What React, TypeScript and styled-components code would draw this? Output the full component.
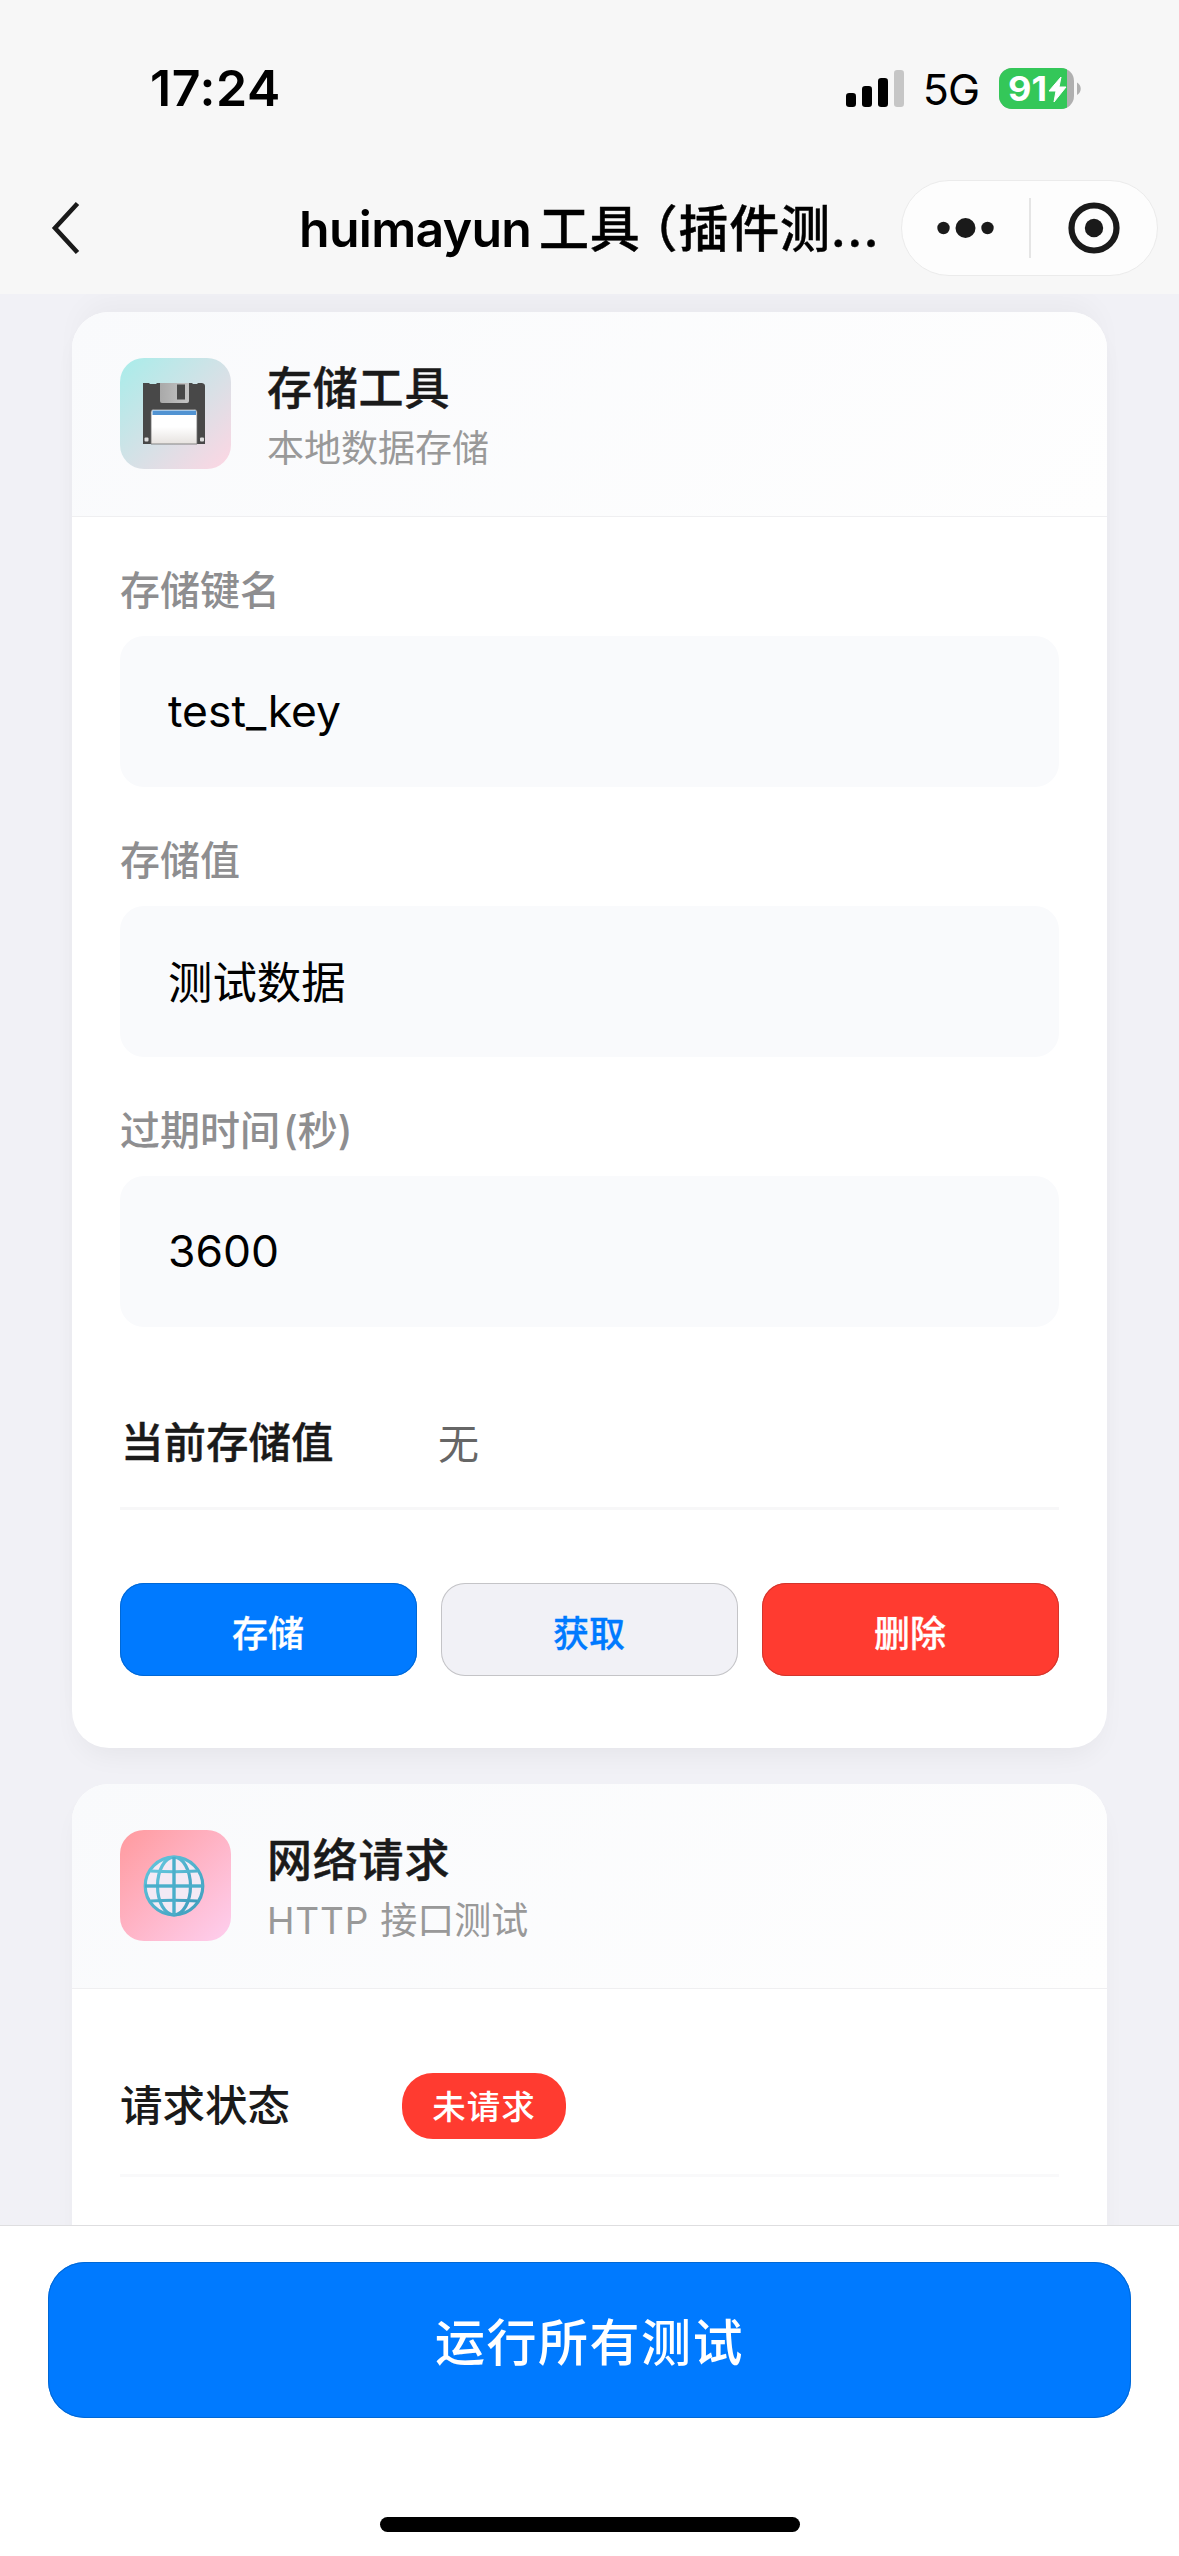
import React from "react";
import styled, { createGlobalStyle, css } from "styled-components";

const Global = createGlobalStyle`
  *, *::before, *::after { box-sizing: border-box; }
  html, body { margin: 0; padding: 0; }
  body {
    width: 1179px;
    height: 2556px;
    overflow: hidden;
    font-family: Inter, "Noto Sans CJK SC", sans-serif;
    background: #f1f1f6;
  }
  button { font-family: inherit; border: 0; padding: 0; margin: 0; }
  svg { display: block; }
`;

const Screen = styled.div`
  width: 1179px;
  height: 2556px;
  display: flex;
  flex-direction: column;
  overflow: hidden;
  background: #f1f1f6;
`;

const TopArea = styled.header`
  flex: none;
  height: 294px;
  background: #f7f7f7;
  z-index: 1;
`;

const StatusBar = styled.div`
  height: 176px;
  padding: 0 97px 0 150px;
  display: flex;
  align-items: center;
  justify-content: space-between;
`;

const Clock = styled.div`
  font-size: 50px;
  line-height: 60px;
  font-weight: 600;
  letter-spacing: 0.6px;
  color: #000;
`;

const StatusIcons = styled.div`
  display: flex;
  align-items: center;
`;

const Network = styled.span`
  margin: 2px 20px 0 18px;
  font-size: 43px;
  line-height: 50px;
  letter-spacing: -1px;
  color: #000;
`;

const NavBar = styled.div`
  height: 104px;
  padding: 0 21px 0 50px;
  display: flex;
  align-items: center;
`;

const BackButton = styled.button`
  width: 249px;
  height: 60px;
  background: none;
`;

const NavTitle = styled.h1`
  flex: 1;
  margin: 2px 0 0;
  font-size: 50px;
  line-height: 60px;
  font-weight: 600;
  white-space: nowrap;
  color: #000;
  display: flex;
`;

const TitleLatin = styled.span`
  width: 240px;
  letter-spacing: -0.7px;
`;

const TitleHan = styled.span`
  font-weight: 500;
  letter-spacing: 0.8px;
  -webkit-text-stroke: 0.45px #000;
`;

const OpenParen = styled.span`
  margin-left: 12px;
  font-feature-settings: "halt";
`;

const Dots = styled.span`
  letter-spacing: 1.2px;
`;

const Capsule = styled.div`
  width: 257px;
  height: 96px;
  border-radius: 48px;
  border: 1px solid #ebebeb;
  background: #fdfdfd;
  display: flex;
  align-items: center;
  justify-content: center;
`;

const Body = styled.main`
  flex: 1;
  min-height: 0;
  overflow: hidden;
  padding: 18px 72px 0;
  display: flex;
  flex-direction: column;
  gap: 36px;
`;

const Card = styled.section`
  flex: none;
  border-radius: 37px;
  background: #fff;
  box-shadow: 0 14px 28px -8px rgba(0, 0, 0, 0.055);
  overflow: hidden;

  &:first-child {
    box-shadow: 0 14px 28px -8px rgba(0, 0, 0, 0.055), 0 -18px 28px -8px rgba(0, 0, 0, 0.035);
  }
`;

const CardHeader = styled.div`
  height: 205px;
  padding: 0 48px;
  display: flex;
  align-items: center;
  gap: 36px;
  border-bottom: 1px solid #efeff1;
  background: linear-gradient(135deg, #f9fafc 0%, #fefefe 100%);
`;

const IconTile = styled.div<{ $from: string; $to: string }>`
  width: 111px;
  height: 111px;
  margin-bottom: 1px;
  padding: 1px 3px 0 0;
  border-radius: 24px;
  display: flex;
  align-items: center;
  justify-content: center;
  background: linear-gradient(135deg, ${(p) => p.$from}, ${(p) => p.$to});
`;

const Heading = styled.div`
  display: flex;
  flex-direction: column;
  padding-top: 7px;
`;

const CardTitle = styled.h2`
  margin: 0;
  font-size: 45px;
  line-height: 62px;
  font-weight: 500;
  letter-spacing: 0.8px;
  color: #1a1a1a;
  -webkit-text-stroke: 0.45px #1a1a1a;
`;

const CardSubtitle = styled.p`
  margin: 0;
  font-size: 37px;
  line-height: 58px;
  color: #999;
`;

const Protocol = styled.span`
  letter-spacing: 0.8px;
`;

const CardBody = styled.div`
  padding: 0 48px;
`;

const Field = styled.label`
  display: block;
  height: 270px;
  padding-top: 46px;
`;

const FieldLabel = styled.span`
  display: flex;
  height: 73px;
  font-size: 40px;
  line-height: 56px;
  font-weight: 500;
  color: #8e8e90;
`;

const FieldUnit = styled.span`
  margin-left: 3px;
`;

const FieldInput = styled.input<{ $lift?: number }>`
  display: block;
  width: 100%;
  height: 151px;
  padding: 0 48px ${(p) => p.$lift ?? 1}px;
  border: 0;
  outline: 0;
  border-radius: 24px;
  background: #f9fafc;
  font-family: inherit;
  font-size: 44.4px;
  color: #000;
`;

const InfoRow = styled.div<{ $height: number; $top: number; $line: string }>`
  height: ${(p) => p.$height}px;
  padding-top: ${(p) => p.$top}px;
  display: flex;
  align-items: center;
  border-bottom: 3px solid ${(p) => p.$line};
`;

const InfoLabel = styled.span<{ $width: number; $strong?: boolean }>`
  width: ${(p) => p.$width}px;
  font-size: 42.5px;
  line-height: 60px;
  font-weight: 500;
  color: #1a1a1a;
  ${(p) => p.$strong && css`
    padding-left: 1px;
    -webkit-text-stroke: 0.35px #1a1a1a;
  `}
`;

const InfoValue = styled.span`
  padding-top: 2px;
  font-size: 41px;
  line-height: 60px;
  color: #666;
`;

const StatusPill = styled.span`
  width: 164px;
  height: 66px;
  padding-bottom: 2px;
  border-radius: 31px;
  display: flex;
  align-items: center;
  justify-content: center;
  background: #ff3b30;
  color: #fff;
  font-size: 33.5px;
  font-weight: 500;
  letter-spacing: 1px;
`;

const Actions = styled.div`
  padding: 73px 0 72px;
  display: grid;
  grid-template-columns: repeat(3, 1fr);
  gap: 24px;
`;

const tones = {
  primary: css`
    background: #007aff;
    color: #fff;
    box-shadow: inset 0 0 0 1px #0068d6;
  `,
  plain: css`
    background: #f1f1f6;
    color: #007aff;
    box-shadow: inset 0 0 0 1px #c4c4c7;
  `,
  danger: css`
    background: #ff3b30;
    color: #fff;
    box-shadow: inset 0 0 0 1px #d2352c;
  `,
};

const ActionButton = styled.button<{ $tone: keyof typeof tones }>`
  height: 93px;
  padding: 2px 1px 0 0;
  border-radius: 24px;
  font-size: 36px;
  font-weight: 500;
  -webkit-text-stroke: 0.3px currentColor;
  ${(p) => tones[p.$tone]}
`;

const BottomBar = styled.footer`
  flex: none;
  height: 331px;
  padding: 36px 48px 0;
  border-top: 1px solid #dedee0;
  background: #fff;
  display: flex;
  flex-direction: column;
  align-items: center;
  z-index: 1;
`;

const RunButton = styled.button`
  width: 100%;
  height: 156px;
  padding-bottom: 2px;
  border-radius: 37px;
  background: #007aff;
  box-shadow: inset 0 0 0 1px #0068d6;
  color: #fff;
  font-size: 50px;
  font-weight: 500;
  letter-spacing: 1.5px;
`;

const HomeIndicator = styled.div`
  width: 420px;
  height: 15px;
  margin-top: 99px;
  border-radius: 8px;
  background: #000;
`;

const SignalIcon = () => (
  <svg width="60" height="40" viewBox="0 0 60 40">
    <rect x="1" y="25" width="10" height="14" rx="3.2" />
    <rect x="17" y="18" width="10" height="21" rx="3.2" />
    <rect x="33" y="10" width="10" height="29" rx="3.2" />
    <rect x="49" y="2" width="10" height="37" rx="3.2" fill="#c6c6c6" />
  </svg>
);

const BatteryIcon = () => (
  <svg width="83" height="41" viewBox="0 0 83 41">
    <defs>
      <clipPath id="battery-body">
        <rect width="75" height="41" rx="13" />
      </clipPath>
    </defs>
    <g clipPath="url(#battery-body)">
      <rect width="75" height="41" fill="#b0b0b0" />
      <rect width="68" height="41" fill="#34c759" />
    </g>
    <path d="M78 14.5C83 17 83 24.5 78 27Z" fill="#b0b0b0" />
    <text x="9" y="33" fontSize="34" fontWeight="700" textLength="39" lengthAdjust="spacingAndGlyphs" fill="#fff">91</text>
    <path d="M62 9L50 23H57L55 34L67 19H60Z" fill="#fff" stroke="#fff" strokeWidth="1" strokeLinejoin="round" />
  </svg>
);

const BackIcon = () => (
  <svg width="32" height="60" viewBox="0 0 32 60">
    <path d="M27.5 5.5L5 30L27.5 54.5" fill="none" stroke="#1a1a1a" strokeWidth="4.6" />
  </svg>
);

const CapsuleIcons = () => (
  <svg width="255" height="94" viewBox="0 0 255 94">
    <g fill="#1a1a1a">
      <circle cx="41.5" cy="47" r="6.2" />
      <circle cx="63.5" cy="47" r="10" />
      <circle cx="85.5" cy="47" r="6.2" />
      <circle cx="192" cy="47" r="9.2" />
    </g>
    <path d="M128 17V77" stroke="#dcdcdc" strokeWidth="1.5" />
    <circle cx="192" cy="47" r="22.5" fill="none" stroke="#1a1a1a" strokeWidth="6.2" />
  </svg>
);

const FloppyIcon = () => (
  <svg width="64" height="64" viewBox="0 0 64 64">
    <defs>
      <linearGradient id="floppy-label" x1="0" y1="0" x2="0" y2="1">
        <stop offset="0" stopColor="#fff" />
        <stop offset="0.5" stopColor="#fff" />
        <stop offset="1" stopColor="#e6e2df" />
      </linearGradient>
      <linearGradient id="floppy-shutter" x1="0" y1="0" x2="1" y2="0">
        <stop offset="0" stopColor="#a9a9a9" />
        <stop offset="1" stopColor="#c4c4c4" />
      </linearGradient>
    </defs>
    <path d="M1 1H7L8 2H14L15 1H50L51 2H55L56 1H60Q63 1.5 63 4V62H1Z" fill="#484848" />
    <path d="M18 1H47V19Q47 21 45 21H20Q18 21 18 19Z" fill="url(#floppy-shutter)" />
    <rect x="35" y="2.5" width="8" height="15" fill="#484848" />
    <path d="M9 62V30Q9 27.5 11.5 27.5H52.5Q55 27.5 55 30V62Z" fill="url(#floppy-label)" stroke="#707070" strokeWidth="0.8" />
    <rect x="10.5" y="28.5" width="43.5" height="4.5" fill="#5193d2" />
    <rect x="2.5" y="55.5" width="4" height="4" rx="1" fill="#ddd" />
    <rect x="58" y="55.5" width="4" height="4" rx="1" fill="#ddd" />
  </svg>
);

const GlobeIcon = () => (
  <svg width="64" height="64" viewBox="0 0 64 64">
    <defs>
      <linearGradient id="globe-line" x1="0" y1="0" x2="1" y2="1">
        <stop offset="0" stopColor="#62c6dd" />
        <stop offset="1" stopColor="#3f9dbd" />
      </linearGradient>
    </defs>
    <circle cx="32" cy="32" r="29.5" fill="#f3eaf5" />
    <g fill="none" stroke="url(#globe-line)" strokeWidth="3.2">
      <circle cx="32" cy="32" r="28.8" />
      <ellipse cx="32" cy="32" rx="16.5" ry="28.8" />
      <path d="M8.5 17Q32 18.5 55.5 17M8.5 47Q32 45.5 55.5 47" />
    </g>
    <rect x="30.3" y="3" width="3.4" height="58" fill="#4aaeca" />
    <rect x="3" y="30.3" width="58" height="3.4" fill="#4aaeca" />
  </svg>
);

type FieldSpec = { label: string; unit?: string; value: string; lift?: number };

const fields: FieldSpec[] = [
  { label: "存储键名", value: "test_key" },
  { label: "存储值", value: "测试数据", lift: 5 },
  { label: "过期时间", unit: "(秒)", value: "3600" },
];

type HeaderProps = {
  title: string;
  subtitle: React.ReactNode;
  from: string;
  to: string;
  icon: React.ReactNode;
};

const Header = ({ title, subtitle, from, to, icon }: HeaderProps) => (
  <CardHeader>
    <IconTile $from={from} $to={to}>{icon}</IconTile>
    <Heading>
      <CardTitle>{title}</CardTitle>
      <CardSubtitle>{subtitle}</CardSubtitle>
    </Heading>
  </CardHeader>
);

export default function App() {
  return (
    <>
      <Global />
      <Screen>
        <TopArea>
          <StatusBar>
            <Clock>17:24</Clock>
            <StatusIcons>
              <SignalIcon />
              <Network>5G</Network>
              <BatteryIcon />
            </StatusIcons>
          </StatusBar>
          <NavBar>
            <BackButton aria-label="返回"><BackIcon /></BackButton>
            <NavTitle>
              <TitleLatin>huimayun</TitleLatin>
              <TitleHan>
                工具<OpenParen>（</OpenParen>插件测<Dots>...</Dots>
              </TitleHan>
            </NavTitle>
            <Capsule><CapsuleIcons /></Capsule>
          </NavBar>
        </TopArea>
        <Body>
          <Card>
            <Header title="存储工具" subtitle="本地数据存储" from="#a8edea" to="#fed6e3" icon={<FloppyIcon />} />
            <CardBody>
              {fields.map((f) => (
                <Field key={f.label}>
                  <FieldLabel>
                    {f.label}
                    {f.unit && <FieldUnit>{f.unit}</FieldUnit>}
                  </FieldLabel>
                  <FieldInput defaultValue={f.value} $lift={f.lift} />
                </Field>
              ))}
              <InfoRow $height={183} $top={52} $line="#f7f7f8">
                <InfoLabel $width={318} $strong>当前存储值</InfoLabel>
                <InfoValue>无</InfoValue>
              </InfoRow>
              <Actions>
                <ActionButton $tone="primary">存储</ActionButton>
                <ActionButton $tone="plain">获取</ActionButton>
                <ActionButton $tone="danger">删除</ActionButton>
              </Actions>
            </CardBody>
          </Card>
          <Card>
            <Header
              title="网络请求"
              subtitle={<><Protocol>HTTP </Protocol>接口测试</>}
              from="#ff9a9e"
              to="#fecfef"
              icon={<GlobeIcon />}
            />
            <CardBody>
              <InfoRow $height={188} $top={48} $line="#f9f9fa">
                <InfoLabel $width={282}>请求状态</InfoLabel>
                <StatusPill>未请求</StatusPill>
              </InfoRow>
              <Actions />
            </CardBody>
          </Card>
        </Body>
        <BottomBar>
          <RunButton>运行所有测试</RunButton>
          <HomeIndicator />
        </BottomBar>
      </Screen>
    </>
  );
}
